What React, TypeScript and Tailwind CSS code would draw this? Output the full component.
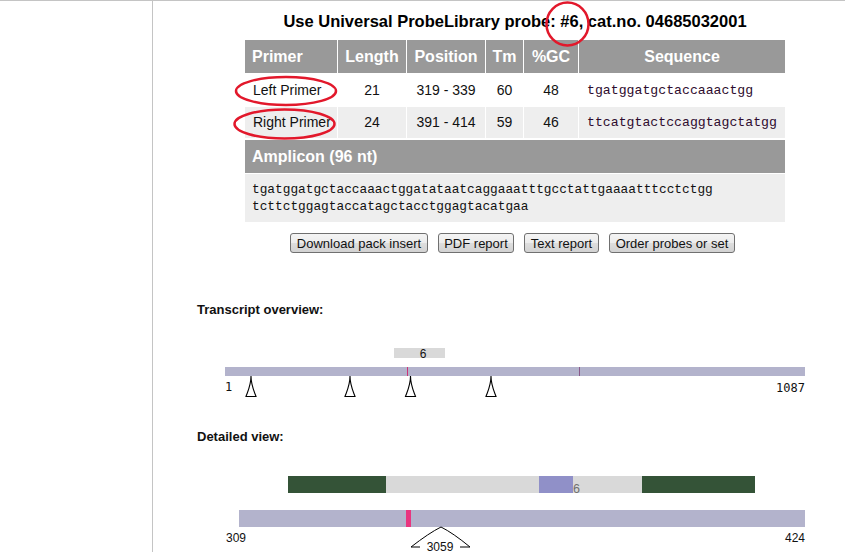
import React from "react";

const cols = "grid grid-cols-[92px_68px_78px_37px_54px_206px] gap-x-px";

const primers = [
  { name: "Left Primer", length: "21", pos: "319 - 339", tm: "60", gc: "48", seq: "tgatggatgctaccaaactgg", bg: "bg-white", h: "h-[33px]" },
  { name: "Right Primer", length: "24", pos: "391 - 414", tm: "59", gc: "46", seq: "ttcatgtactccaggtagctatgg", bg: "bg-[#eeeeee]", h: "h-[31px]" },
];

const buttons = [
  { label: "Download pack insert", w: "w-[138px]" },
  { label: "PDF report", w: "w-[76px]" },
  { label: "Text report", w: "w-[75px]" },
  { label: "Order probes or set", w: "w-[126px]" },
];

const sans = "Liberation Sans, Arial, sans-serif";
const mono = "DejaVu Sans Mono, monospace";

function Marker({ x }: { x: number }) {
  return (
    <path
      d={`M ${x} 35 C ${x} 44, ${x - 3} 50, ${x - 5} 55.5 L ${x + 5} 55.5 C ${x + 3} 50, ${x} 44, ${x} 35`}
      fill="white"
      stroke="black"
      strokeWidth="1.1"
    />
  );
}

function Overview() {
  return (
    <svg width="692" height="60" className="block mt-[23px]">
      <rect x="241" y="7" width="51" height="10" fill="#d9d9d9" />
      <text x="270" y="16.5" textAnchor="middle" fontSize="12" fontFamily={sans} fill="#111">6</text>
      <rect x="72" y="26" width="580" height="9" fill="#b3b3cc" />
      <rect x="254" y="26" width="1" height="9" fill="#cc3377" />
      <rect x="426" y="26" width="1" height="9" fill="#8a5a8a" />
      {[98, 197, 257.5, 338].map((x) => (
        <Marker key={x} x={x} />
      ))}
      <text x="72" y="50" fontSize="12" fontFamily={mono} fill="#111">1</text>
      <text x="652" y="50.5" textAnchor="end" fontSize="12" fontFamily={mono} fill="#111">1087</text>
    </svg>
  );
}

function Detailed() {
  return (
    <svg width="692" height="92" className="block mt-[16px]">
      <rect x="135" y="15" width="98" height="17" fill="#345337" />
      <rect x="233" y="15" width="256" height="17" fill="#d9d9d9" />
      <rect x="386" y="15" width="34" height="17" fill="#9090c8" />
      <text x="420" y="31.5" fontSize="12.5" fontFamily={sans} fill="#707070">6</text>
      <rect x="489" y="15" width="113" height="17" fill="#345337" />
      <rect x="86" y="49" width="566" height="17" fill="#b3b3cc" />
      <rect x="253" y="49" width="5" height="17" fill="#e8357f" />
      <text x="73" y="80.5" fontSize="12" fontFamily={sans} fill="#111">309</text>
      <text x="652" y="80.5" textAnchor="end" fontSize="12" fontFamily={sans} fill="#111">424</text>
      <path d="M 267 86 L 258 86 Q 276 72 288 66 Q 300 72 317 86 L 307 86" fill="none" stroke="black" strokeWidth="1" />
      <text x="287" y="89.5" textAnchor="middle" fontSize="12" fontFamily={sans} fill="#111">3059</text>
    </svg>
  );
}

export default function App() {
  return (
    <div className="relative flex w-[845px] h-[552px] overflow-hidden bg-white border-t border-[#c4c4c4] font-['Liberation_Sans',Arial,sans-serif] text-black">
      <div className="w-[153px] shrink-0 border-r border-[#c4c4c4]" />
      <div className="flex-1">
        <div className="ml-[92px] w-[540px]">
          <h1 className="mt-[11px] text-center font-bold text-[16.5px] leading-[18px] whitespace-nowrap">
            Use Universal ProbeLibrary probe: #6, cat.no. 04685032001
          </h1>

          <div className="mt-[10px]">
            <div className={`${cols} h-[33px] mb-px text-white font-bold text-[16px]`}>
              <div className="bg-[#999999] flex items-center pl-[7px]">Primer</div>
              <div className="bg-[#999999] flex items-center justify-center">Length</div>
              <div className="bg-[#999999] flex items-center justify-center">Position</div>
              <div className="bg-[#999999] flex items-center justify-center">Tm</div>
              <div className="bg-[#999999] flex items-center justify-center">%GC</div>
              <div className="bg-[#999999] flex items-center justify-center">Sequence</div>
            </div>
            {primers.map((p) => (
              <div key={p.name} className={`${cols} ${p.h} text-[14px] text-[#111]`}>
                <div className={`${p.bg} flex items-center pl-[8px]`}>{p.name}</div>
                <div className={`${p.bg} flex items-center justify-center`}>{p.length}</div>
                <div className={`${p.bg} flex items-center justify-center`}>{p.pos}</div>
                <div className={`${p.bg} flex items-center justify-center`}>{p.tm}</div>
                <div className={`${p.bg} flex items-center justify-center`}>{p.gc}</div>
                <div className={`${p.bg} flex items-center pl-[8px] font-['Liberation_Mono',monospace] text-[13.2px] text-[#2e0c2e]`}>
                  {p.seq}
                </div>
              </div>
            ))}
            <div className="mt-[2px] h-[33px] bg-[#999999] flex items-center pl-[7px] text-white font-bold text-[16px]">
              Amplicon (96 nt)
            </div>
            <div className="mt-px h-[48px] bg-[#eeeeee] py-[7px] pl-[7px] font-['Liberation_Mono',monospace] text-[12.8px] leading-[17px] text-[#111]">
              <div>tgatggatgctaccaaactggatataatcaggaaatttgcctattgaaaatttcctctgg</div>
              <div>tcttctggagtaccatagctacctggagtacatgaa</div>
            </div>
          </div>

          <div className="mt-[11px] flex justify-center gap-[10px] pr-[5px]">
            {buttons.map((b) => (
              <button
                key={b.label}
                type="button"
                className={`${b.w} h-[20px] rounded-[3px] border border-[#707070] bg-[linear-gradient(#f4f4f4_0%,#ececec_50%,#dedede_50%,#d2d2d2_100%)] text-[13px] leading-none text-[#111]`}
              >
                {b.label}
              </button>
            ))}
          </div>
        </div>

        <div className="ml-[44px] mt-[49px] font-bold text-[13px] leading-[16px] text-[#111]">Transcript overview:</div>
        <Overview />

        <div className="ml-[44px] mt-[28px] font-bold text-[13px] leading-[16px] text-[#111]">Detailed view:</div>
        <Detailed />
      </div>

      <svg className="absolute inset-0 pointer-events-none" width="845" height="552">
        <ellipse cx="286" cy="90" rx="50" ry="14" fill="none" stroke="#e2182b" strokeWidth="2.5" />
        <ellipse cx="284.5" cy="123" rx="50" ry="14.5" fill="none" stroke="#e2182b" strokeWidth="2.5" />
        <ellipse cx="567.5" cy="23" rx="21" ry="21.5" fill="none" stroke="#e2182b" strokeWidth="2.5" />
      </svg>
    </div>
  );
}
